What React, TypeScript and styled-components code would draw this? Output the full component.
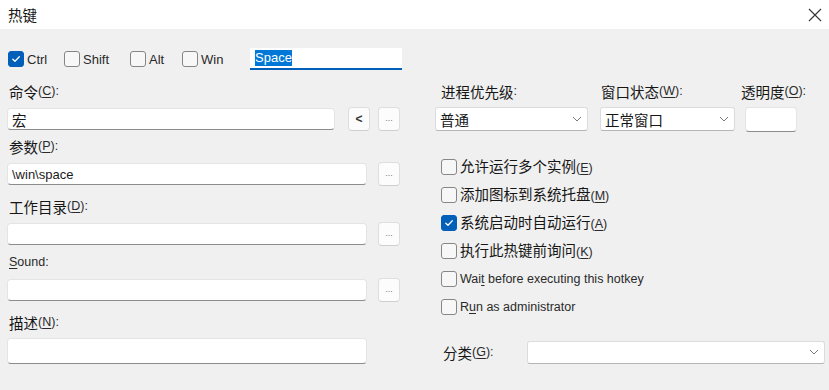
import React from 'react'
import styled, { createGlobalStyle } from 'styled-components'

const GlobalStyle = createGlobalStyle`
  html, body {
    margin: 0;
    padding: 0;
    background: #f0f0f0;
  }
  body {
    font-family: "Liberation Sans", "Noto Sans CJK SC", sans-serif;
    font-size: 13px;
    color: #1b1b1b;
  }
`

const Check: React.FC<{ checked?: boolean }> = ({ checked }) => (
  <Box $checked={checked}>
    {checked && (
      <svg width="10" height="10" viewBox="0 0 10 10">
        <path d="M1.8 5.2 L4 7.3 L8.3 2.8" fill="none" stroke="#fff" strokeWidth="1.3" strokeLinecap="round" strokeLinejoin="round" />
      </svg>
    )}
  </Box>
)

const Chevron = () => (
  <svg width="10" height="6" viewBox="0 0 10 6">
    <path d="M1 1 L5 5 L9 1" fill="none" stroke="#7a7a7a" strokeWidth="1" />
  </svg>
)

const Mn: React.FC<{ k: string; colon?: boolean }> = ({ k, colon = true }) => (
  <Latin>
    (<u>{k}</u>){colon ? ':' : ''}
  </Latin>
)

const options = [
  { zh: '允许运行多个实例', k: 'E' },
  { zh: '添加图标到系统托盘', k: 'M' },
  { zh: '系统启动时自动运行', k: 'A', checked: true },
  { zh: '执行此热键前询问', k: 'K' },
]

const App: React.FC = () => {
  return (
    <Window>
      <GlobalStyle />
      <TitleBar>
        <Zh>热键</Zh>
        <svg width="14" height="14" viewBox="0 0 14 14">
          <path d="M1 1 L13 13 M13 1 L1 13" stroke="#333" strokeWidth="1.1" />
        </svg>
      </TitleBar>

      <Body>
        <HotkeyRow>
          <KeyOption $w={56}>
            <Check checked />
            Ctrl
          </KeyOption>
          <KeyOption $w={66}>
            <Check />
            Shift
          </KeyOption>
          <KeyOption $w={52}>
            <Check />
            Alt
          </KeyOption>
          <KeyOption $w={68}>
            <Check />
            Win
          </KeyOption>
          <KeyInput>
            <Selected>Space</Selected>
          </KeyInput>
        </HotkeyRow>

        <Columns>
          <LeftColumn>
            <Field $top={0}>
              <FieldLabel>
                <Zh>命令</Zh>
                <Mn k="C" />
              </FieldLabel>
              <FieldRow>
                <TextInput $w={328}>
                  <Zh>宏</Zh>
                </TextInput>
                <SmallButton $ml={13}>&lt;</SmallButton>
                <SmallButton $ml={8} $dots>...</SmallButton>
              </FieldRow>
            </Field>

            <Field $top={7}>
              <FieldLabel>
                <Zh>参数</Zh>
                <Mn k="P" />
              </FieldLabel>
              <FieldRow>
                <TextInput $w={360}>\win\space</TextInput>
                <SmallButton $ml={11} $dots>...</SmallButton>
              </FieldRow>
            </Field>

            <Field $top={12}>
              <FieldLabel>
                <Zh>工作目录</Zh>
                <Mn k="D" />
              </FieldLabel>
              <FieldRow>
                <TextInput $w={360} />
                <SmallButton $ml={11} $dots>...</SmallButton>
              </FieldRow>
            </Field>

            <Field $top={8}>
              <FieldLabel>
                <Latin>
                  <u>S</u>ound:
                </Latin>
              </FieldLabel>
              <FieldRow>
                <TextInput $w={360} />
                <SmallButton $ml={11} $dots>...</SmallButton>
              </FieldRow>
            </Field>

            <Field $top={12}>
              <FieldLabel>
                <Zh>描述</Zh>
                <Mn k="N" />
              </FieldLabel>
              <FieldRow $h={26}>
                <TextInput $w={360} $h={26} />
              </FieldRow>
            </Field>
          </LeftColumn>

          <RightColumn>
            <ComboRow>
              <ComboGroup>
                <FieldLabel $pad={6}>
                  <Zh>进程优先级</Zh>
                  <Latin>:</Latin>
                </FieldLabel>
                <Select $w={153}>
                  <Zh>普通</Zh>
                  <Chevron />
                </Select>
              </ComboGroup>
              <ComboGroup $ml={12}>
                <FieldLabel $pad={1}>
                  <Zh>窗口状态</Zh>
                  <Mn k="W" />
                </FieldLabel>
                <Select $w={135}>
                  <Zh>正常窗口</Zh>
                  <Chevron />
                </Select>
              </ComboGroup>
              <ComboGroup $ml={10}>
                <FieldLabel $pad={-4}>
                  <Zh>透明度</Zh>
                  <Mn k="O" />
                </FieldLabel>
                <TextInput $w={52} $h={25} />
              </ComboGroup>
            </ComboRow>

            <CheckList>
              {options.map((o) => (
                <CheckItem key={o.k}>
                  <Check checked={o.checked} />
                  <span>
                    <Zh>{o.zh}</Zh>
                    <Mn k={o.k} colon={false} />
                  </span>
                </CheckItem>
              ))}
              <CheckItem>
                <Check />
                <Latin>
                  Wai<u>t</u> before executing this hotkey
                </Latin>
              </CheckItem>
              <CheckItem>
                <Check />
                <Latin>
                  R<u>u</u>n as administrator
                </Latin>
              </CheckItem>
            </CheckList>

            <CategoryRow>
              <CategoryLabel>
                <Zh>分类</Zh>
                <Mn k="G" />
              </CategoryLabel>
              <Select $w={298} $h={23}>
                <span />
                <Chevron />
              </Select>
            </CategoryRow>
          </RightColumn>
        </Columns>
      </Body>
    </Window>
  )
}

export default App

const Window = styled.div`
  width: 829px;
  height: 390px;
  background: #f0f0f0;
  overflow: hidden;
`

const TitleBar = styled.div`
  height: 29px;
  background: #fff;
  display: flex;
  align-items: center;
  justify-content: space-between;
  padding: 0 7px 0 8px;
  box-sizing: border-box;
  font-size: 14.5px;
`

const Zh = styled.span`
  font-family: "Noto Sans CJK SC", sans-serif;
  font-size: 14.5px;
  color: #161616;
`

const Latin = styled.span`
  font-family: "Liberation Sans", sans-serif;
  font-size: 12.5px;
  color: #2a2a2a;

  u {
    text-underline-offset: 2px;
  }
`

const Body = styled.div`
  padding: 19px 4px 0 7px;
`

const HotkeyRow = styled.div`
  display: flex;
  align-items: center;
  height: 22px;
  padding-left: 1px;
`

const KeyOption = styled.label<{ $w: number }>`
  display: flex;
  align-items: center;
  gap: 3px;
  width: ${(p) => p.$w}px;
  font-size: 13px;
  color: #2a2a2a;
`

const Box = styled.span<{ $checked?: boolean }>`
  width: 16px;
  height: 16px;
  box-sizing: border-box;
  border-radius: 3px;
  border: 1px solid ${(p) => (p.$checked ? '#005fb8' : '#868686')};
  background: ${(p) => (p.$checked ? '#005fb8' : '#f7f7f7')};
  display: flex;
  align-items: center;
  justify-content: center;
  flex: none;
`

const KeyInput = styled.div`
  width: 152px;
  height: 22px;
  box-sizing: border-box;
  background: #fff;
  border-bottom: 2px solid #005fb8;
  padding: 0 0 0 5px;
  display: flex;
  align-items: center;
  font-size: 13px;
`

const Selected = styled.span`
  background: #0078d7;
  color: #fff;
  line-height: 16px;
`

const Columns = styled.div`
  display: flex;
  margin-top: 13px;
`

const LeftColumn = styled.div`
  width: 395px;
  display: flex;
  flex-direction: column;
`

const RightColumn = styled.div`
  width: 390px;
  margin-left: 33px;
  display: flex;
  flex-direction: column;
`

const Field = styled.div<{ $top: number }>`
  margin-top: ${(p) => p.$top}px;
  display: flex;
  flex-direction: column;
`

const FieldLabel = styled.div<{ $pad?: number }>`
  height: 17px;
  line-height: 17px;
  padding-left: ${(p) => Math.max(p.$pad ?? 2, 0)}px;
  margin-left: ${(p) => Math.min(p.$pad ?? 0, 0)}px;
  white-space: nowrap;
  display: flex;
  align-items: center;
`

const FieldRow = styled.div<{ $h?: number }>`
  display: flex;
  align-items: center;
  height: ${(p) => p.$h ?? 24}px;
  margin-top: 7px;
`

const TextInput = styled.div<{ $w: number; $h?: number }>`
  width: ${(p) => p.$w}px;
  height: ${(p) => p.$h ?? 22}px;
  box-sizing: border-box;
  background: #fff;
  border: 1px solid #e4e4e4;
  border-bottom: 1px solid #8c8c8c;
  border-radius: 4px;
  padding: 0 4px;
  display: flex;
  align-items: center;
  font-size: 13px;
  color: #1b1b1b;
  flex: none;
`

const SmallButton = styled.div<{ $ml: number; $dots?: boolean }>`
  width: 22px;
  height: 24px;
  margin-left: ${(p) => p.$ml}px;
  box-sizing: border-box;
  background: #fcfcfc;
  border: 1px solid #dedede;
  border-bottom-color: #cfcfcf;
  border-radius: 4px;
  display: flex;
  align-items: ${(p) => (p.$dots ? 'flex-end' : 'center')};
  justify-content: center;
  padding-bottom: ${(p) => (p.$dots ? '7px' : '0')};
  font-size: ${(p) => (p.$dots ? '9px' : '12px')};
  font-weight: ${(p) => (p.$dots ? 'normal' : 'bold')};
  color: ${(p) => (p.$dots ? '#777' : '#333')};
  line-height: 1;
  flex: none;
`

const ComboRow = styled.div`
  display: flex;
  align-items: flex-start;
`

const ComboGroup = styled.div<{ $ml?: number }>`
  display: flex;
  flex-direction: column;
  gap: 7px;
  margin-left: ${(p) => p.$ml ?? 0}px;
`

const Select = styled.div<{ $w: number; $h?: number }>`
  width: ${(p) => p.$w}px;
  height: ${(p) => p.$h ?? 24}px;
  box-sizing: border-box;
  background: #fff;
  border: 1px solid #dcdcdc;
  border-bottom-color: #b5b5b5;
  border-radius: 3px;
  display: flex;
  align-items: center;
  justify-content: space-between;
  padding: 0 5px 0 4px;
`

const CheckList = styled.div`
  margin-top: 21px;
  padding-left: 6px;
  display: flex;
  flex-direction: column;
`

const CheckItem = styled.label`
  height: 28px;
  flex: none;
  line-height: 17px;
  display: flex;
  align-items: center;
  gap: 3px;
  white-space: nowrap;
`

const CategoryRow = styled.div`
  margin-top: 19px;
  display: flex;
  align-items: center;
  height: 24px;
`

const CategoryLabel = styled.div`
  width: 84px;
  padding-left: 8px;
  display: flex;
  align-items: center;
`
